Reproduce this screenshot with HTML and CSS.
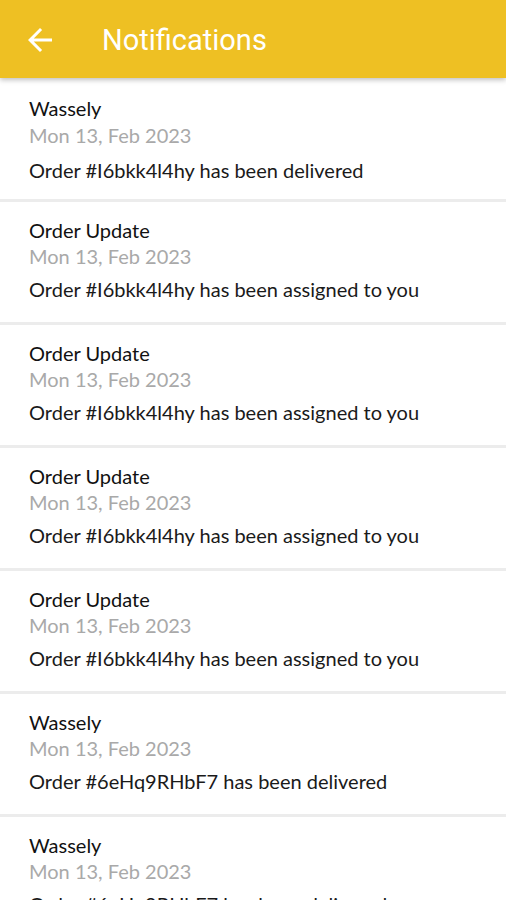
FILE: index.html
```html
<!DOCTYPE html>
<html>
<head>
    <meta name="viewport" content="width=device-width, initial-scale=1.0">
    <title>Notifications</title>
    <link rel="stylesheet" href="styles.css">
</head>
<body>
    <div class="app">
        <header class="topbar">
            <svg class="back" width="36" height="36" viewBox="0 0 24 24" aria-hidden="true">
                <path d="M20 11H7.83l5.59-5.59L12 4l-8 8 8 8 1.41-1.41L7.83 13H20v-2z" fill="#fff"/>
            </svg>
            <h1 class="title">Notifications</h1>
        </header>

        <ul class="list">
            <li class="item">
                <div class="item-title">Wassely</div>
                <div class="item-date">Mon 13, Feb 2023</div>
                <div class="item-text">Order #I6bkk4l4hy has been delivered</div>
            </li>
            <li class="item">
                <div class="item-title">Order Update</div>
                <div class="item-date">Mon 13, Feb 2023</div>
                <div class="item-text">Order #I6bkk4l4hy has been assigned to you</div>
            </li>
            <li class="item">
                <div class="item-title">Order Update</div>
                <div class="item-date">Mon 13, Feb 2023</div>
                <div class="item-text">Order #I6bkk4l4hy has been assigned to you</div>
            </li>
            <li class="item">
                <div class="item-title">Order Update</div>
                <div class="item-date">Mon 13, Feb 2023</div>
                <div class="item-text">Order #I6bkk4l4hy has been assigned to you</div>
            </li>
            <li class="item">
                <div class="item-title">Order Update</div>
                <div class="item-date">Mon 13, Feb 2023</div>
                <div class="item-text">Order #I6bkk4l4hy has been assigned to you</div>
            </li>
            <li class="item">
                <div class="item-title">Wassely</div>
                <div class="item-date">Mon 13, Feb 2023</div>
                <div class="item-text">Order #6eHq9RHbF7 has been delivered</div>
            </li>
            <li class="item">
                <div class="item-title">Wassely</div>
                <div class="item-date">Mon 13, Feb 2023</div>
                <div class="item-text">Order #6eHq9RHbF7 has been delivered</div>
            </li>
        </ul>
    </div>
</body>
</html>
```

FILE: styles.css
```css
body {
    margin: 0;
    padding: 0;
    font-family: 'Lato', 'Noto Sans', sans-serif;
    background: #fff;
}
.app {
    width: 506px;
    height: 900px;
    overflow: hidden;
}
.topbar {
    position: relative;
    z-index: 1;
    height: 78px;
    display: flex;
    align-items: center;
    padding: 2px 0 0 22px;
    box-sizing: border-box;
    background: #EEC023;
    box-shadow: 0 2px 5px rgba(0, 0, 0, .25);
}
.back {
    display: block;
}
.title {
    margin: 0 0 0 44px;
    color: #fff;
    font-family: 'Roboto', sans-serif;
    font-size: 29px;
    font-weight: 400;
}
.list {
    list-style: none;
    margin: 0;
    padding: 0;
}
.item {
    padding: 16px 29px 21px;
    border-bottom: 3px solid #ececec;
}
.item:first-child {
    padding-top: 18px;
    padding-bottom: 17px;
}
.item:first-child .item-date {
    line-height: 30px;
}
.item:first-child .item-text {
    margin-top: 8px;
}
.item-title {
    font-size: 20px;
    line-height: 24px;
    color: #111;
}
.item-date {
    font-size: 20px;
    line-height: 28px;
    color: #a9a9a9;
}
.item-text {
    margin-top: 7px;
    font-size: 20px;
    line-height: 24px;
    color: #1a1a1a;
}
```
